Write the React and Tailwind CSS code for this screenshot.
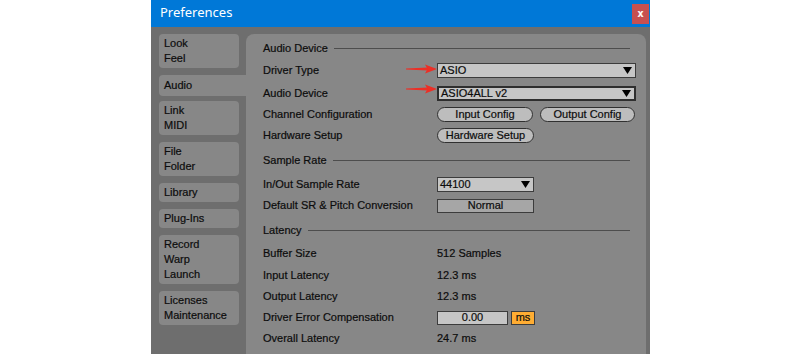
import React from 'react'

const font = { fontFamily: '"Liberation Sans", Arial, sans-serif' }

function Tab({ lines, active }) {
  if (active) {
    return (
      <div className="-mb-[2px] flex h-[21px] w-[87px] items-center rounded-l-[4px] bg-[#878787] pl-[5px]">
        {lines.map((l) => (
          <div key={l}>{l}</div>
        ))}
      </div>
    )
  }
  return (
    <div className="flex w-[80px] flex-col justify-center rounded-[4px] bg-[#878787] py-[2px] pl-[5px] leading-[15px]">
      {lines.map((l) => (
        <div key={l}>{l}</div>
      ))}
    </div>
  )
}

function Heading({ children, className = '' }) {
  return (
    <div className={`flex h-[21px] items-center ${className}`}>
      <span>{children}</span>
      <div className="ml-[6px] mr-[7px] h-px flex-1 bg-[#4d4d4d]" />
    </div>
  )
}

function Row({ label, children, className = '' }) {
  return (
    <div className={`flex h-[21px] items-center ${className}`}>
      <div className="w-[174px] shrink-0">{label}</div>
      <div className="flex items-center gap-[7px]">{children}</div>
    </div>
  )
}

function Dropdown({ value, width, thick }) {
  return (
    <div
      className={`flex h-[15px] items-center justify-between bg-[#c6c6c6] pl-[2px] pr-[3px] ${width} ${
        thick ? 'border-2 border-[#2e2e2e]' : 'border border-[#3c3c3c]'
      }`}
    >
      <span className="leading-none">{value}</span>
      <svg width="9" height="7" viewBox="0 0 9 7">
        <path d="M0 0 H9 L4.5 7 Z" fill="#000" />
      </svg>
    </div>
  )
}

function Pill({ children, width }) {
  return (
    <div className={`flex h-[15px] items-center justify-center rounded-full border border-[#303030] bg-[#bdbdbd] leading-none ${width}`}>
      {children}
    </div>
  )
}

function Arrow({ top }) {
  return (
    <svg className={`absolute left-[406px] ${top}`} width="32" height="10" viewBox="0 0 32 10">
      <path d="M0 4.6 L22 3.6 L22 6.4 L0 5.4 Z" fill="#ec2f26" />
      <path d="M19 0.5 L31 5 L19 9.5 L21.5 5 Z" fill="#ec2f26" />
    </svg>
  )
}

export default function App() {
  return (
    <div className="relative h-[354px] w-[800px] overflow-hidden bg-white text-[11px] text-[#0c0c0c] [-webkit-text-stroke:0.2px]" style={font}>
      <div className="ml-[151px] flex h-full w-[499px] flex-col">
        <div className="flex h-[27px] shrink-0 items-start justify-between bg-[#0078d7]">
          <div className="pl-[9px] pt-[4px] text-[13px] leading-[16px] text-white [-webkit-text-stroke:0px]" style={{ fontFamily: '"Noto Sans", "Open Sans", sans-serif' }}>
            Preferences
          </div>
          <div className="mr-[1px] mt-[4px] flex h-[20px] w-[17px] items-center justify-center bg-[#c75050] text-[10px] font-bold leading-none text-white">
            x
          </div>
        </div>
        <div className="flex min-w-0 flex-1 bg-[#6e6e6e] pl-[8px] pr-[4px] pt-[7px]">
          <div className="flex w-[87px] shrink-0 flex-col gap-[7px]">
            <Tab lines={['Look', 'Feel']} />
            <Tab lines={['Audio']} active />
            <Tab lines={['Link', 'MIDI']} />
            <Tab lines={['File', 'Folder']} />
            <Tab lines={['Library']} />
            <Tab lines={['Plug-Ins']} />
            <Tab lines={['Record', 'Warp', 'Launch']} />
            <Tab lines={['Licenses', 'Maintenance']} />
          </div>
          <div className="min-w-0 flex-1 rounded-t-[8px] bg-[#878787] pl-[17px] pr-[9px] pt-[4px]">
            <Heading>Audio Device</Heading>
            <Row label="Driver Type" className="mt-[1px]">
              <Dropdown value="ASIO" width="w-[199px]" />
            </Row>
            <Row label="Audio Device" className="mt-[2px]">
              <Dropdown value="ASIO4ALL v2" width="w-[199px]" thick />
            </Row>
            <Row label="Channel Configuration">
              <Pill width="w-[96px]">Input Config</Pill>
              <Pill width="w-[95px]">Output Config</Pill>
            </Row>
            <Row label="Hardware Setup">
              <Pill width="w-[97px]">Hardware Setup</Pill>
            </Row>
            <Heading className="mt-[4px]">Sample Rate</Heading>
            <Row label="In/Out Sample Rate" className="mt-[3px]">
              <Dropdown value="44100" width="w-[97px]" />
            </Row>
            <Row label="Default SR & Pitch Conversion">
              <div className="flex h-[14px] w-[97px] items-center justify-center border border-[#3c3c3c] bg-[#a6a6a6] leading-none">
                Normal
              </div>
            </Row>
            <Heading className="mt-[4px]">Latency</Heading>
            <Row label="Buffer Size" className="mt-[2px]">512 Samples</Row>
            <Row label="Input Latency" className="mt-[1px]">12.3 ms</Row>
            <Row label="Output Latency">12.3 ms</Row>
            <Row label="Driver Error Compensation">
              <div className="-mr-[4px] flex h-[14px] w-[71px] items-center justify-center border border-[#3c3c3c] bg-[#c6c6c6] leading-none">
                0.00
              </div>
              <div className="flex h-[14px] w-[24px] items-center justify-center border border-[#3c3c3c] bg-[#ffad33] leading-none">
                ms
              </div>
            </Row>
            <Row label="Overall Latency">24.7 ms</Row>
          </div>
        </div>
      </div>
      <Arrow top="top-[64px]" />
      <Arrow top="top-[84px]" />
    </div>
  )
}
